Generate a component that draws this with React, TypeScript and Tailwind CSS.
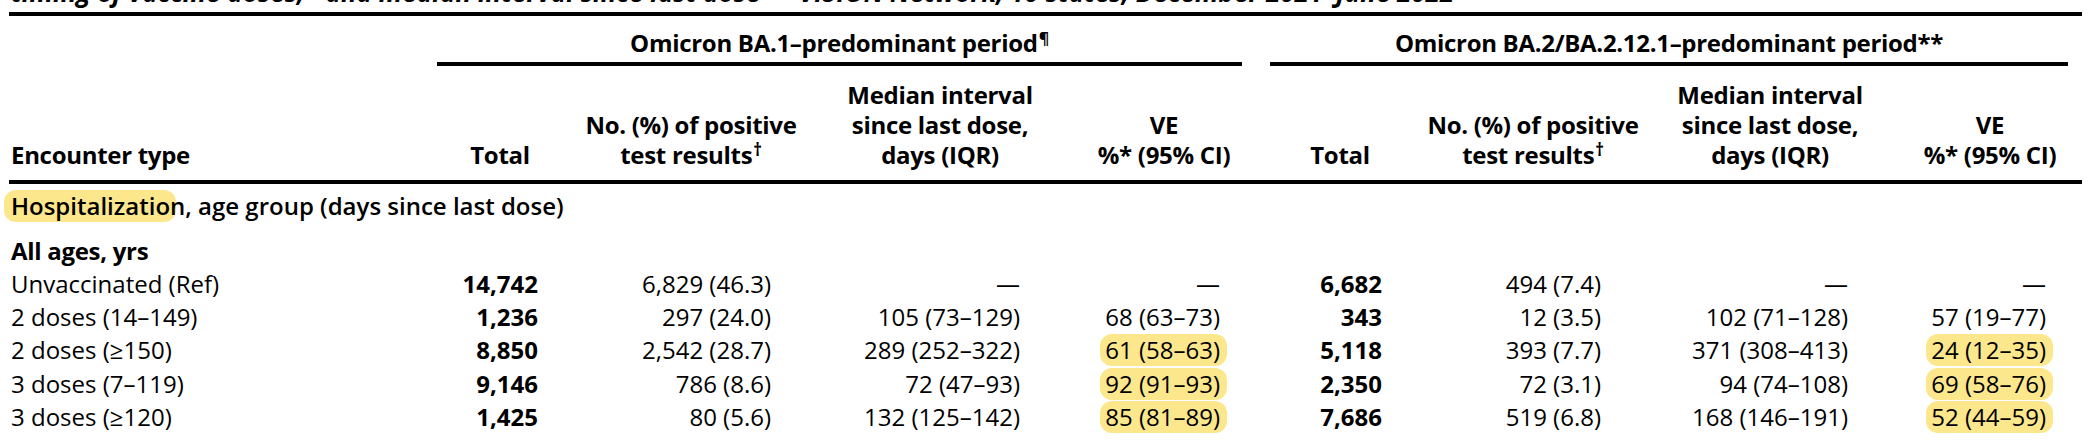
import React from 'react';

// shared column tracks for header + body
const cols = 'grid grid-cols-[443px_96px_233px_249px_200px_162px_219px_247px_198px]';
const hl = 'inline-block rounded-[12px] bg-[#fde78c] pl-[5px] pr-[7px] leading-[32px]';

type Row = {
  label: string;
  t1: string;
  n1: string;
  m1: string;
  v1: string;
  t2: string;
  n2: string;
  m2: string;
  v2: string;
  hl?: boolean;
};

const rows: Row[] = [
  { label: 'Unvaccinated (Ref)', t1: '14,742', n1: '6,829 (46.3)', m1: '—', v1: '—', t2: '6,682', n2: '494 (7.4)', m2: '—', v2: '—' },
  { label: '2 doses (14–149)', t1: '1,236', n1: '297 (24.0)', m1: '105 (73–129)', v1: '68 (63–73)', t2: '343', n2: '12 (3.5)', m2: '102 (71–128)', v2: '57 (19–77)' },
  { label: '2 doses (≥150)', t1: '8,850', n1: '2,542 (28.7)', m1: '289 (252–322)', v1: '61 (58–63)', t2: '5,118', n2: '393 (7.7)', m2: '371 (308–413)', v2: '24 (12–35)', hl: true },
  { label: '3 doses (7–119)', t1: '9,146', n1: '786 (8.6)', m1: '72 (47–93)', v1: '92 (91–93)', t2: '2,350', n2: '72 (3.1)', m2: '94 (74–108)', v2: '69 (58–76)', hl: true },
  { label: '3 doses (≥120)', t1: '1,425', n1: '80 (5.6)', m1: '132 (125–142)', v1: '85 (81–89)', t2: '7,686', n2: '519 (6.8)', m2: '168 (146–191)', v2: '52 (44–59)', hl: true },
];

const HeadCell = ({ children, pad, left }: { children: React.ReactNode; pad?: string; left?: boolean }) => (
  <div
    className={`flex h-[90px] flex-col justify-end whitespace-nowrap ${
      left ? 'items-start pl-[2px]' : 'items-center'
    } ${pad ?? ''}`}
  >
    {children}
  </div>
);

const Ve = ({ value, mark }: { value: string; mark?: boolean }) => (
  <div className={mark ? 'text-right pr-[3px]' : 'text-right pr-[10px]'}>
    {mark ? <span className={hl}>{value}</span> : value}
  </div>
);

const Dag = () => <sup className="text-[17px] ml-[1px]">†</sup>;

export default function App() {
  return (
    <div className="w-[2090px] h-[440px] overflow-hidden bg-white text-black font-['Open_Sans',sans-serif] text-[24px]">
      <div className="pl-[9px] w-[2082px]">
        {/* title, cut off by the crop */}
        <div className="h-[12px] overflow-hidden">
          <div className="mt-[-23px] whitespace-nowrap pl-[2px] text-[26px] font-bold italic leading-[30px]">
            timing of vaccine doses,* and median interval since last dose — VISION Network, 10 states, December 2021–June 2022
          </div>
        </div>
        <div className="h-[4px] bg-black" />

        {/* period groups */}
        <div className="flex pt-[12px] font-bold tracking-[-0.3px]">
          <div className="w-[428px] shrink-0" />
          <div className="w-[805px] shrink-0 text-center">
            <div className="leading-[30px] whitespace-nowrap">
              Omicron BA.1–predominant period<sup className="text-[16px] ml-[1px]">¶</sup>
            </div>
            <div className="mt-[4px] h-[4px] bg-black" />
          </div>
          <div className="w-[28px] shrink-0" />
          <div className="w-[798px] shrink-0 text-center">
            <div className="leading-[30px] whitespace-nowrap">Omicron BA.2/BA.2.12.1–predominant period**</div>
            <div className="mt-[4px] h-[4px] bg-black" />
          </div>
        </div>

        {/* column heads */}
        <div className={`${cols} mt-[14px] font-bold leading-[30px] tracking-[-0.3px]`}>
          <HeadCell left>Encounter type</HeadCell>
          <HeadCell>Total</HeadCell>
          <HeadCell pad="pl-[53px]">
            <span>No. (%) of positive</span>
            <span>
              test results<Dag />
            </span>
          </HeadCell>
          <HeadCell pad="pl-[69px]">
            <span>Median interval</span>
            <span>since last dose,</span>
            <span>days (IQR)</span>
          </HeadCell>
          <HeadCell pad="pl-[68px]">
            <span>VE</span>
            <span>%* (95% CI)</span>
          </HeadCell>
          <HeadCell pad="pl-[58px]">Total</HeadCell>
          <HeadCell pad="pl-[63px]">
            <span>No. (%) of positive</span>
            <span>
              test results<Dag />
            </span>
          </HeadCell>
          <HeadCell pad="pl-[71px]">
            <span>Median interval</span>
            <span>since last dose,</span>
            <span>days (IQR)</span>
          </HeadCell>
          <HeadCell pad="pl-[66px]">
            <span>VE</span>
            <span>%* (95% CI)</span>
          </HeadCell>
        </div>
        <div className="mt-[10px] h-[4px] bg-black" />

        {/* section */}
        <div className="pt-[6px] pl-[2px] font-semibold leading-[32px] whitespace-nowrap">
          <span className="-ml-[7px] mr-[-6px] inline-block rounded-[12px] bg-[#fde78c] pl-[7px] pr-[6px]">Hospitalizatio</span>
          n, age group (days since last dose)
        </div>
        <div className="mt-[12px] pl-[2px] font-bold leading-[33px] tracking-[-0.3px]">All ages, yrs</div>

        {rows.map((r) => (
          <div key={r.label} className={`${cols} h-[33.3px] items-center leading-[32px]`}>
            <div className="pl-[2px] whitespace-nowrap">{r.label}</div>
            <div className="text-right pr-[10px] font-bold">{r.t1}</div>
            <div className="text-right pr-[10px]">{r.n1}</div>
            <div className="text-right pr-[10px]">{r.m1}</div>
            <Ve value={r.v1} mark={r.hl} />
            <div className="text-right pr-[10px] font-bold">{r.t2}</div>
            <div className="text-right pr-[10px]">{r.n2}</div>
            <div className="text-right pr-[10px]">{r.m2}</div>
            <Ve value={r.v2} mark={r.hl} />
          </div>
        ))}
      </div>
    </div>
  );
}
